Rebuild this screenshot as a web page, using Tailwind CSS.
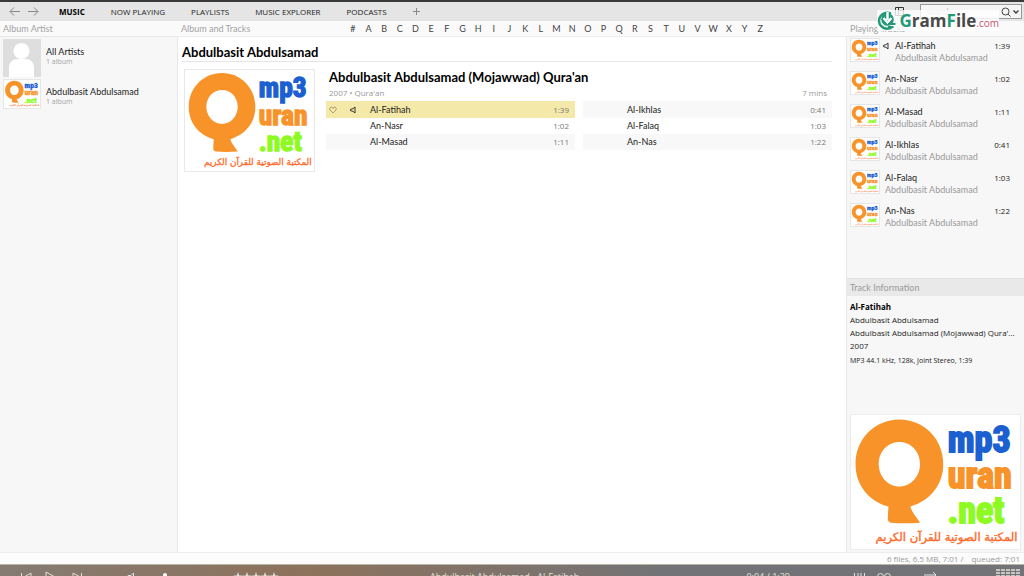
<!DOCTYPE html>
<html lang="en">
<head>
<meta charset="utf-8">
<title>Music</title>
<meta name="viewport" content="width=device-width, initial-scale=1">
<script src="https://cdn.jsdelivr.net/npm/@tailwindcss/browser@4"></script>
</head>
<body class="relative flex h-screen flex-col overflow-hidden bg-white font-['Lato','Noto_Sans',sans-serif] text-[9px] leading-3 text-[#222]">

<!-- Shared symbols -->
<svg class="hidden" aria-hidden="true">
  <symbol id="cover" viewBox="0 0 131 103">
    <rect width="131" height="103" fill="#fff"/>
    <path fill="#f8932a" fill-rule="evenodd" d="M37.500 3C56.500 3 71.500 18 71.500 37.500C71.500 54 61 66 46 70.500C47 75 51 79 53.500 83Q41 84 31 83Q28.500 82.500 28.500 80L29 70.500C14 66.500 3.500 54 3.500 37.500C3.500 18 18.500 3 37.500 3ZM37.500 20.500C28.500 20.500 21.500 28 21.500 37.500C21.500 47 28.500 55 37.500 55C46.500 55 53.500 47 53.500 37.500C53.500 28 46.500 20.500 37.500 20.500Z"/>
    <g font-family="'Liberation Sans Narrow','Roboto Condensed','DejaVu Sans Condensed',sans-serif" font-weight="700" font-size="28" stroke-width="1.400">
      <text x="75" y="28" fill="#1c5fd0" stroke="#1c5fd0">mp3</text>
      <text x="75" y="56" fill="#f8932a" stroke="#f8932a">uran</text>
      <text x="75" y="83" fill="#8dfb22" stroke="#8dfb22">.net</text>
    </g>
    <text x="74" y="97" text-anchor="middle" direction="rtl" font-family="'DejaVu Sans',sans-serif" font-size="9" fill="#ff6a2b" stroke="#ff6a2b" stroke-width="0.300">المكتبة الصوتية للقرآن الكريم</text>
  </symbol>
  <symbol id="speaker" viewBox="0 0 8 8"><path d="M6 1V7L4 5.300L1.500 4.700V3.300L4 2.700Z" fill="none" stroke="currentColor" stroke-width="0.900"/></symbol>
</svg>

<header class="flex h-[21px] shrink-0 items-center border-t-2 border-[#3b3838] bg-[#e5e5e5]">
  <div class="flex w-[59px] gap-2 pl-[9px] text-[#8a8a8a]">
    <button aria-label="Back"><svg class="h-[9px] w-[11px]" viewBox="0 0 11 9" fill="none" stroke="currentColor"><path d="M11 4.500H1M5 .5L1 4.500L5 8.500"/></svg></button>
    <button aria-label="Forward"><svg class="h-[9px] w-[11px]" viewBox="0 0 11 9" fill="none" stroke="currentColor"><path d="M0 4.500H10M6 .5L10 4.500L6 8.500"/></svg></button>
  </div>
  <nav class="flex items-center gap-[26px] font-['Open_Sans',sans-serif] text-[8px] whitespace-nowrap">
    <a href="#" class="font-bold text-black">MUSIC</a>
    <a href="#">NOW PLAYING</a>
    <a href="#">PLAYLISTS</a>
    <a href="#">MUSIC EXPLORER</a>
    <a href="#">PODCASTS</a>
    <button aria-label="Add tab"><svg class="size-[7px]" viewBox="0 0 7 7" stroke="#888"><path d="M3.500 0V7M0 3.500H7"/></svg></button>
  </nav>
  <button aria-label="Layout" class="mr-4 ml-auto"><svg class="h-[9px] w-[9px]" viewBox="0 0 9 9" fill="none" stroke="#333"><path d="M.5 .5H8.500V8.500H.5ZM3.500 .5V8.500M3.500 3.500H8.500"/></svg></button>
  <label class="mr-[2px] flex h-[15px] w-[102px] items-center border border-[#999] bg-[#f5f5f5] pr-[2px] pl-[5px]">
    <input type="text" aria-label="Search" placeholder="search" class="w-0 grow outline-none placeholder:text-[#bbb]">
    <svg class="h-[10px] w-[18px]" viewBox="0 0 18 10" fill="none" stroke="#444"><circle cx="4.500" cy="4.500" r="3.500"/><path d="M7 7L9.500 9.500"/><path d="M12.500 3.500L15 6L17.500 3.500" stroke-width="1.500"/></svg>
  </label>
</header>

<div class="flex h-[15px] shrink-0 items-center bg-[#fafafa] text-[#a3a3a3]">
  <h2 class="w-[177px] shrink-0 pl-[3px]">Album Artist</h2>
  <div class="flex grow items-center">
    <h2 class="w-[168px] pl-1">Album and Tracks</h2>
    <nav class="grid w-[423px] grid-cols-27 text-center text-[#444]">
      <a href="#">#</a><a href="#">A</a><a href="#">B</a><a href="#">C</a><a href="#">D</a><a href="#">E</a><a href="#">F</a><a href="#">G</a><a href="#">H</a><a href="#">I</a><a href="#">J</a><a href="#">K</a><a href="#">L</a><a href="#">M</a><a href="#">N</a><a href="#">O</a><a href="#">P</a><a href="#">Q</a><a href="#">R</a><a href="#">S</a><a href="#">T</a><a href="#">U</a><a href="#">V</a><a href="#">W</a><a href="#">X</a><a href="#">Y</a><a href="#">Z</a>
    </nav>
  </div>
  <h2 class="w-[178px] shrink-0 pl-1">Playing Tracks</h2>
</div>

<div class="flex min-h-0 grow">
  <aside class="w-[178px] shrink-0 border-t border-r border-[#e8e8e8] bg-[#f7f7f7] pt-[2px] pl-[3px]">
    <ul class="flex flex-col gap-[2px]">
      <li class="flex items-center gap-[5px]">
        <svg class="size-[38px] bg-[#dedede]" viewBox="0 0 38 38" fill="#fff"><circle cx="18.500" cy="12" r="8"/><path d="M6 38V29Q6 20 15 20H22Q31 20 31 29V38Z"/></svg>
        <div class="pb-[2px] leading-[10px]"><p>All Artists</p><p class="font-['Open_Sans',sans-serif] text-[7px] text-[#a3a3a3]">1 album</p></div>
      </li>
      <li class="flex items-center gap-[5px]">
        <svg class="h-[30px] w-[38px] border border-[#e6e6e6]"><use href="#cover"/></svg>
        <div class="pt-[6px] leading-[10px]"><p>Abdulbasit Abdulsamad</p><p class="font-['Open_Sans',sans-serif] text-[7px] text-[#a3a3a3]">1 album</p></div>
      </li>
    </ul>
  </aside>

  <main class="min-w-0 grow border-t border-[#ededed] pr-[14px] pl-1">
    <h1 class="border-b border-[#e6e6e6] pt-[7px] pb-[1px] text-[13px] leading-4 font-bold text-black">Abdulbasit Abdulsamad</h1>
    <section class="flex pt-[7px]">
      <svg class="ml-[2px] h-[103px] w-[131px] shrink-0 border border-[#e8e8e8]"><use href="#cover"/></svg>
      <div class="ml-[11px] grow">
        <h2 class="pl-[3px] text-[13px] leading-4 font-bold text-black">Abdulbasit Abdulsamad (Mojawwad) Qura'an</h2>
        <p class="flex justify-between pt-[2px] pr-[5px] pb-[2px] pl-[3px] font-['Open_Sans',sans-serif] text-[8px] text-[#999]"><span>2007 • Qura'an</span><span>7 mins</span></p>
        <div class="grid grid-cols-2 gap-2">
          <table class="w-full table-fixed">
            <colgroup><col class="w-[44px]"><col><col class="w-10"></colgroup>
            <tr class="h-[17px] bg-[#f4e9a8]">
              <td><span class="flex items-center gap-3 pl-[3px]">
                <button aria-label="Love"><svg class="size-2" viewBox="0 0 8 8" fill="none" stroke="#998e60" stroke-width=".8"><path d="M4 7L1 4Q0 2 2 1Q3.500 1 4 2.500Q4.500 1 6 1Q8 2 7 4Z"/></svg></button>
                <svg class="size-2"><use href="#speaker"/></svg></span></td>
              <td>Al-Fatihah</td><td class="pr-[6px] text-right font-['Open_Sans',sans-serif] text-[8px] text-[#777]">1:39</td></tr>
            <tr class="h-4"><td></td><td>An-Nasr</td><td class="pr-[6px] text-right font-['Open_Sans',sans-serif] text-[8px] text-[#777]">1:02</td></tr>
            <tr class="h-4 bg-[#f8f8f8]"><td></td><td>Al-Masad</td><td class="pr-[6px] text-right font-['Open_Sans',sans-serif] text-[8px] text-[#777]">1:11</td></tr>
          </table>
          <table class="w-full table-fixed">
            <colgroup><col class="w-[44px]"><col><col class="w-10"></colgroup>
            <tr class="h-[17px] bg-[#f8f8f8]"><td></td><td>Al-Ikhlas</td><td class="pr-[6px] text-right font-['Open_Sans',sans-serif] text-[8px] text-[#777]">0:41</td></tr>
            <tr class="h-4"><td></td><td>Al-Falaq</td><td class="pr-[6px] text-right font-['Open_Sans',sans-serif] text-[8px] text-[#777]">1:03</td></tr>
            <tr class="h-4 bg-[#f8f8f8]"><td></td><td>An-Nas</td><td class="pr-[6px] text-right font-['Open_Sans',sans-serif] text-[8px] text-[#777]">1:22</td></tr>
          </table>
        </div>
      </div>
    </section>
  </main>

  <aside class="flex w-[178px] shrink-0 flex-col border-t border-l border-[#e8e8e8] bg-[#f7f7f7]">
    <ul class="flex h-[241px] flex-col gap-[9px] pt-px pr-[14px] pl-[3px]">
      <li class="flex h-6 gap-[5px]"><svg class="h-6 w-[30px] shrink-0 border border-[#e6e6e6]"><use href="#cover"/></svg><svg class="mt-1 -ml-[3px] size-2 shrink-0"><use href="#speaker"/></svg><div class="grow pt-[2px] whitespace-nowrap"><p class="flex justify-between"><span>Al-Fatihah</span><span class="font-['Open_Sans',sans-serif] text-[8px]">1:39</span></p><p class="text-[#999]">Abdulbasit Abdulsamad</p></div></li>
      <li class="flex h-6 gap-[5px]"><svg class="h-6 w-[30px] shrink-0 border border-[#e6e6e6]"><use href="#cover"/></svg><div class="grow pt-[2px]"><p class="flex justify-between"><span>An-Nasr</span><span class="font-['Open_Sans',sans-serif] text-[8px]">1:02</span></p><p class="text-[#999]">Abdulbasit Abdulsamad</p></div></li>
      <li class="flex h-6 gap-[5px]"><svg class="h-6 w-[30px] shrink-0 border border-[#e6e6e6]"><use href="#cover"/></svg><div class="grow pt-[2px]"><p class="flex justify-between"><span>Al-Masad</span><span class="font-['Open_Sans',sans-serif] text-[8px]">1:11</span></p><p class="text-[#999]">Abdulbasit Abdulsamad</p></div></li>
      <li class="flex h-6 gap-[5px]"><svg class="h-6 w-[30px] shrink-0 border border-[#e6e6e6]"><use href="#cover"/></svg><div class="grow pt-[2px]"><p class="flex justify-between"><span>Al-Ikhlas</span><span class="font-['Open_Sans',sans-serif] text-[8px]">0:41</span></p><p class="text-[#999]">Abdulbasit Abdulsamad</p></div></li>
      <li class="flex h-6 gap-[5px]"><svg class="h-6 w-[30px] shrink-0 border border-[#e6e6e6]"><use href="#cover"/></svg><div class="grow pt-[2px]"><p class="flex justify-between"><span>Al-Falaq</span><span class="font-['Open_Sans',sans-serif] text-[8px]">1:03</span></p><p class="text-[#999]">Abdulbasit Abdulsamad</p></div></li>
      <li class="flex h-6 gap-[5px]"><svg class="h-6 w-[30px] shrink-0 border border-[#e6e6e6]"><use href="#cover"/></svg><div class="grow pt-[2px]"><p class="flex justify-between"><span>An-Nas</span><span class="font-['Open_Sans',sans-serif] text-[8px]">1:22</span></p><p class="text-[#999]">Abdulbasit Abdulsamad</p></div></li>
    </ul>
    <h2 class="h-[18px] border-t border-[#e0e0e0] bg-[#e9e9e9] pl-[3px] leading-[17px] text-[#999]">Track Information</h2>
    <div class="pt-1 pl-[3px] font-['Open_Sans',sans-serif] text-[8px] leading-[13px] whitespace-nowrap">
      <p class="font-bold text-black">Al-Fatihah</p>
      <p>Abdulbasit Abdulsamad</p>
      <p>Abdulbasit Abdulsamad (Mojawwad) Qura'...</p>
      <p>2007</p>
      <p class="pt-[2px] text-[7px]">MP3 44.1 kHz, 128k, Joint Stereo, 1:39</p>
    </div>
    <svg class="mt-auto mb-[2px] ml-[3px] h-[136px] w-[171px] border border-[#ececec] bg-white"><use href="#cover"/></svg>
  </aside>
</div>

<div class="flex h-3 shrink-0 items-center justify-end gap-2 border-t border-[#ededed] bg-[#fcfcfc] pr-1 font-['Open_Sans',sans-serif] text-[8px] text-[#999]"><span>6 files, 6.5 MB, 7:01 /</span><span>queued: 7:01</span></div>

<!-- The player is taller than the strip that stays on screen -->
<footer class="h-3 shrink-0 overflow-hidden border-t border-[#b8b5a8] bg-linear-to-r from-[#857b72] via-[#8d725c] via-30% to-[#727376] to-65% text-[#e4e0dc]">
  <div class="grid h-6 grid-cols-[1fr_164px_1fr] items-center">
    <div class="flex items-center">
      <button aria-label="Previous" class="ml-[21px]"><svg class="h-2 w-[11px]" viewBox="0 0 11 8" fill="none" stroke="currentColor"><path d="M.5 0V8M10 0V8L3 4Z"/></svg></button>
      <button aria-label="Play" class="ml-[13px]"><svg class="h-3 w-[11px]" viewBox="0 0 11 12" fill="none" stroke="currentColor"><path d="M1 1L10 6L1 11Z"/></svg></button>
      <button aria-label="Next" class="ml-4"><svg class="h-2 w-[11px]" viewBox="0 0 11 8" fill="none" stroke="currentColor"><path d="M9.500 0V8M1 0V8L8 4Z"/></svg></button>
      <button aria-label="Mute" class="ml-[44px]"><svg class="size-2" viewBox="0 0 8 8" fill="none" stroke="currentColor"><path d="M6.500 0V8L4 5.500H1V2.500H4Z"/></svg></button>
      <svg class="ml-[26px] size-2" viewBox="0 0 8 8" fill="#fff"><circle cx="4" cy="2" r="2"/><path d="M0 4H8V5H0Z"/></svg>
      <svg class="ml-[64px] h-[10px] w-[46px]" viewBox="0 0 46 10" fill="currentColor"><path id="st" d="M5 0L6.200 3.500H9.500L7 5.700L8 9L5 7L2 9L3 5.700L.5 3.500H3.800Z"/><use href="#st" x="9"/><use href="#st" x="18"/><use href="#st" x="27"/><use href="#st" x="36"/></svg>
    </div>
    <p class="pr-4 text-center font-['Open_Sans',sans-serif] whitespace-nowrap">Abdulbasit Abdulsamad - Al-Fatihah</p>
    <div class="flex items-center justify-end font-['Open_Sans',sans-serif]">
      <span>0:04 / 1:39</span>
      <button aria-label="Equalizer" class="ml-16"><svg class="h-[10px] w-[11px]" viewBox="0 0 11 10" stroke="currentColor"><path d="M.5 1V10M4 1V10M7 1V10M10.500 1V10"/></svg></button>
      <button aria-label="Scrobble" class="ml-3"><svg class="h-[10px] w-[14px]" viewBox="0 0 14 10" fill="none" stroke="currentColor"><circle cx="3.500" cy="4.500" r="3"/><circle cx="10.500" cy="4.500" r="3"/></svg></button>
      <button aria-label="Repeat" class="ml-[33px]"><svg class="h-[10px] w-[13px]" viewBox="0 0 13 10" fill="none" stroke="currentColor"><path d="M0 3H12M9 0L12 3L9 6"/></svg></button>
      <svg class="mr-1 mb-1 ml-[59px] h-3 w-6" viewBox="0 0 24 12" stroke="currentColor" stroke-width="1.500" stroke-dasharray="4 1"><path d="M0 1H24M0 4H24M0 7H24M0 10H24"/></svg>
    </div>
  </div>
</footer>

<!-- Site badge over the search area -->
<div class="absolute top-[10px] right-[25px] flex h-[21px] items-center bg-white/80">
  <svg class="h-5 w-[20px]" viewBox="0 0 20 20" fill="none"><path d="M14 2.800A8 8 0 1 0 15 16" stroke="#229a78" stroke-width="2.500"/><circle cx="10.500" cy="8.500" r="6.300" fill="#229a78"/><path d="M10.500 1V9M6.500 7L10.500 11.500L14.500 7" stroke="#fff" stroke-width="2.400"/><path d="M11 13H18.500M11 16H16.500" stroke="#229a78" stroke-width="2"/></svg>
  <p class="pt-[3px] pl-[3px] font-['Open_Sans',sans-serif] text-[17px] leading-5 font-bold text-[#4a4a4a]"><span class="text-[#229a78]">G</span>ram<span class="text-[#229a78]">F</span>ile<span class="text-[10px] font-normal text-[#c8506a]">.com</span></p>
</div>
</body>
</html>
